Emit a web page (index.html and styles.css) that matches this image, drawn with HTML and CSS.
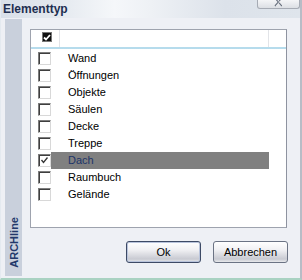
FILE: index.html
```html
<!DOCTYPE html>
<html lang="de">
<head>
    <meta charset="UTF-8">
    <title>Elementtyp</title>
    <link rel="stylesheet" href="styles.css">
</head>
<body>
    <div class="window">
        <div class="titlebar">
            <b class="title">Elementtyp</b>
            <div class="close">
                <svg width="12" height="7" viewBox="0 0 12 7"><path d="M2 -2 L9 6 M9 -2 L2 6" stroke="#6a7280" stroke-width="1.4" fill="none"/><path d="M3 -2 L10 6 M10 -2 L3 6" stroke="#fff" stroke-width="0.6" fill="none"/></svg>
            </div>
        </div>
        <div class="main">
            <div class="sidebar"><span>ARCHline</span></div>
            <div class="content">
                <div class="list">
                    <div class="head">
                        <div class="hcol1">
                            <span class="hcheck">
                                <svg width="8" height="7" viewBox="0 0 8 7"><path d="M1 3.5 L3 5.5 L7 1" stroke="#fff" stroke-width="1.8" fill="none"/></svg>
                            </span>
                        </div>
                        <div class="hcol2"></div>
                        <div class="hcol3"></div>
                    </div>
                    <div class="row"><span class="box"></span><span class="label">Wand</span></div>
                    <div class="row"><span class="box"></span><span class="label">Öffnungen</span></div>
                    <div class="row"><span class="box"></span><span class="label">Objekte</span></div>
                    <div class="row"><span class="box"></span><span class="label">Säulen</span></div>
                    <div class="row"><span class="box"></span><span class="label">Decke</span></div>
                    <div class="row"><span class="box"></span><span class="label">Treppe</span></div>
                    <div class="row selected">
                        <span class="box checked">
                            <svg width="9" height="9" viewBox="0 0 9 9"><path d="M1.5 4 L3.5 6.5 L7.5 1.5" stroke="#333" stroke-width="1.3" fill="none"/></svg>
                        </span>
                        <span class="label">Dach</span>
                    </div>
                    <div class="row"><span class="box"></span><span class="label">Raumbuch</span></div>
                    <div class="row"><span class="box"></span><span class="label">Gelände</span></div>
                </div>
                <div class="buttons">
                    <button class="btn default">Ok</button>
                    <button class="btn">Abbrechen</button>
                </div>
            </div>
        </div>
    </div>
</body>
</html>
```

FILE: styles.css
```css
body{
    margin: 0;
    background-color: #eef0f5;
}

body *{
    font-family: "Liberation Sans", Arial, sans-serif;
    box-sizing: border-box;
}

.window{
    width: 302px;
    height: 280px;
    background-color: #eef0f5;
    border-left: 1px solid #e4eaf0;
    border-right: 2px solid #b8bcc6;
    border-bottom: 2px solid #a9d2c2;
    display: flex;
    flex-direction: column;
}

.titlebar{
    height: 18px;
    flex: none;
    display: flex;
    justify-content: space-between;
    background: linear-gradient(to right, #d9e0e9 0%, #e3e8ee 18%, #f5f7fa 38%, #eef1f5 50%, #dce2ea 75%, #dfe5ec 100%);
    position: relative;
}

.title{
    font-size: 12px;
    color: #1e2f50;
    padding-left: 2px;
    line-height: 18px;
}

.close{
    position: absolute;
    right: 0;
    top: 0;
    width: 43px;
    height: 9px;
    border: 1px solid #a6abb4;
    border-top: none;
    border-radius: 0 0 3px 3px;
    background: linear-gradient(#f4f5f7, #dcdfe4);
    text-align: center;
    line-height: 0;
}

.main{
    flex: 1;
    display: flex;
    padding: 1px 0 2px 4px;
}

.sidebar{
    width: 17px;
    background-color: #c9d0dc;
    display: flex;
    align-items: flex-end;
    justify-content: center;
    padding-bottom: 8px;
}

.sidebar span{
    writing-mode: vertical-rl;
    transform: rotate(180deg);
    font-weight: bold;
    font-size: 11px;
    color: #22386a;
}

.content{
    flex: 1;
    padding: 10px 13px 0 8px;
    display: flex;
    flex-direction: column;
}

.list{
    height: 199px;
    background-color: #fff;
    border: 1px solid #9ea3ae;
    border-right-color: #8e93a0;
}

.head{
    display: flex;
    height: 19px;
    border-bottom: 2px solid;
    border-image: linear-gradient(#d6ebf5, #b5dbec) 1;
    margin-bottom: 1px;
}

.hcol1{
    width: 29px;
    border-right: 1px solid #e2e4e8;
    display: flex;
    justify-content: center;
    padding: 2px 0 0 4px;
}

.hcol2{
    width: 209px;
    border-right: 1px solid #e2e4e8;
}

.hcol3{
    flex: 1;
}

.hcheck{
    width: 10px;
    height: 10px;
    background-color: #111;
    border: 1px solid #777;
    display: flex;
    align-items: center;
    justify-content: center;
}

.row{
    height: 17px;
    display: flex;
    align-items: center;
    padding-left: 7px;
    font-size: 11px;
    color: #000;
}

.box{
    width: 13px;
    height: 13px;
    background-color: #fff;
    border: 1px solid;
    border-color: #7d7d7d #d8d8d8 #d8d8d8 #7d7d7d;
    box-shadow: inset 1px 1px #3f3f3f;
    display: flex;
    align-items: center;
    justify-content: center;
    flex: none;
}

.label{
    padding-left: 17px;
    height: 17px;
    line-height: 17px;
    width: 218px;
}

.selected .label{
    background-color: #808080;
    color: #1d3468;
}

.buttons{
    display: flex;
    justify-content: flex-end;
    gap: 12px;
    margin-top: 13px;
    margin-right: -1px;
}

.btn{
    width: 75px;
    height: 22px;
    border: 1px solid #6b7384;
    border-radius: 3px;
    background: linear-gradient(#ffffff 0%, #f0f0f3 40%, #c8cad2 85%, #e8e9ec 100%);
    font-size: 11px;
    color: #000;
    padding: 0;
}

.btn.default{
    border-color: #3d4a66;
    box-shadow: inset 0 0 0 1px #b9c4dc;
}
```
